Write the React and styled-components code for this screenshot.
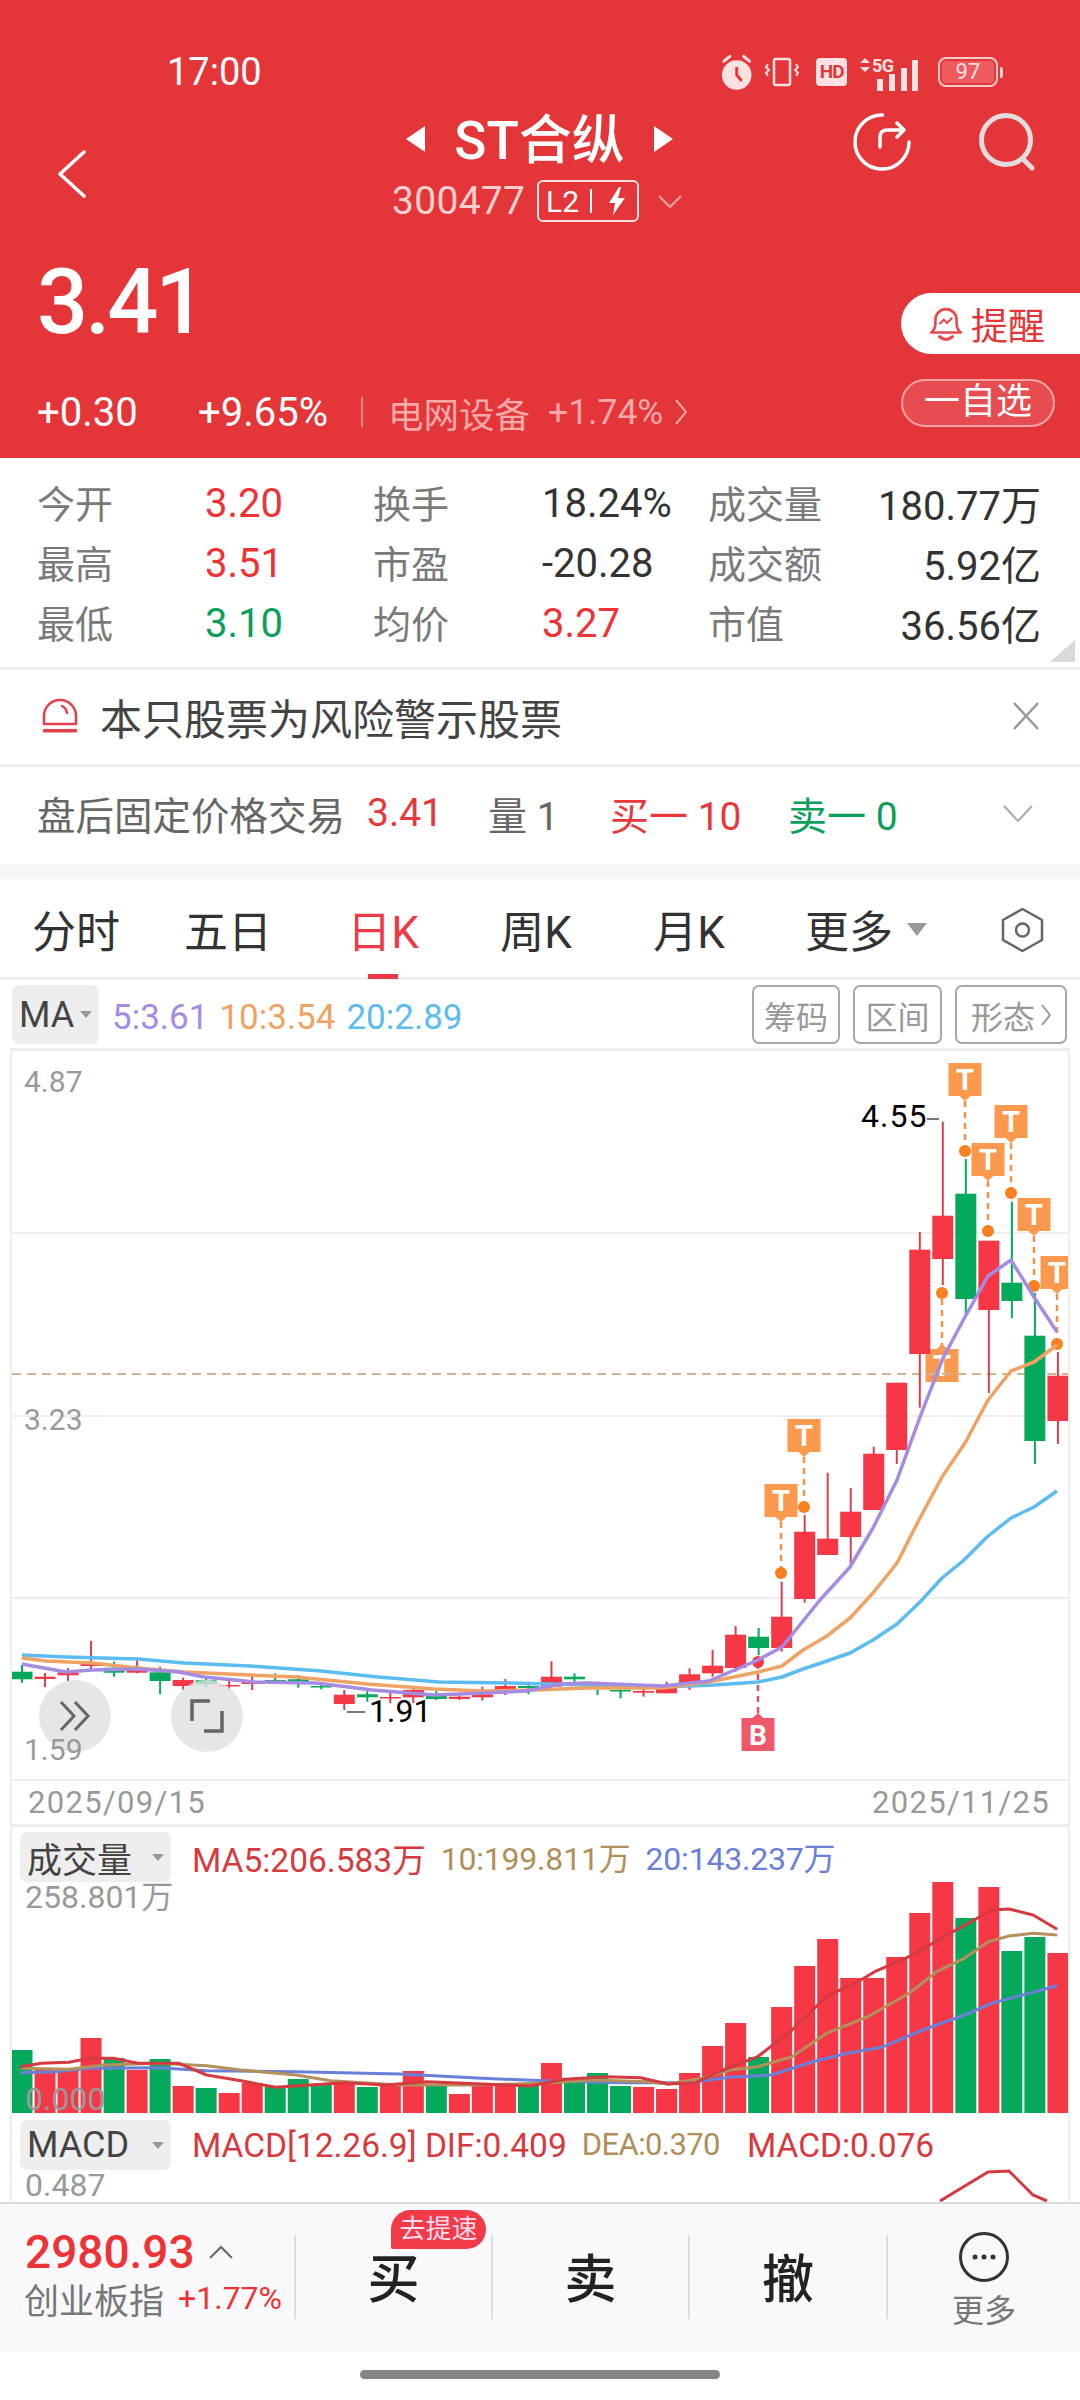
import React from "react";
import styled, { createGlobalStyle } from "styled-components";

const RED = "#e43639";
const UP = "#f63746";
const DOWN = "#05a95b";
const FONT = `Roboto, "Noto Sans CJK SC", sans-serif`;

const Global = createGlobalStyle`
  html, body { margin: 0; padding: 0; background: #fff; }
  body { font-family: ${FONT}; }
`;

const Page = styled.div`width:1080px; height:2400px; overflow:hidden; display:flex; flex-direction:column; background:#fff; color:#333;`;

/* header */
const Header = styled.header`height:458px; flex:none; background:${RED}; color:#fff; display:flex; flex-direction:column;`;
const StatusBar = styled.div`height:44px; margin-top:50px; margin-bottom:6px; padding:0 77px 0 167px; display:flex; align-items:center; justify-content:space-between;`;
const Clock = styled.span`font-size:38px; line-height:44px;`;
const StatusIcons = styled.div`display:flex; align-items:center; width:283px; margin-left:-2px;`;
const HdBadge = styled.span`width:31px; height:28px; margin-left:16px; background:#fde0e0; color:${RED}; border-radius:4px; font-size:19px; font-weight:700; line-height:28px; text-align:center; letter-spacing:-1px;`;
const Battery = styled.span`position:relative; margin-left:15px; width:61px; height:30px; box-sizing:border-box; border:2px solid #f8c9c9; border-radius:8px; padding:2px; display:flex;`;
const BatteryFill = styled.span`flex:1; background:#ee5a5e; border-radius:3px; color:#fde0e0; font-size:22px; line-height:22px; text-align:center;`;
const BatteryNub = styled.span`width:3px; height:11px; margin-left:2px; background:#f8c9c9; border-radius:0 2px 2px 0;`;

const NavRow = styled.div`height:130px; flex:none; display:flex;`;
const BackSlot = styled.div`width:400px; padding:50px 0 0 58px; box-sizing:border-box;`;
const TitleBlock = styled.div`width:280px; display:flex; flex-direction:column; align-items:flex-start;`;
const TitleLine = styled.div`height:60px; margin-top:9px; width:100%; display:flex; align-items:center; justify-content:space-between; padding:0 7px 0 6px; box-sizing:border-box;`;
const Title = styled.span`font-size:53px; line-height:60px; font-weight:500; position:relative; top:2px;`;
const Arrow = styled.span`width:0; height:0; border-top:13px solid transparent; border-bottom:13px solid transparent; ${p => p.$right ? "border-left:19px solid #fff;" : "border-right:19px solid #fff;"}`;
const SubLine = styled.div`height:50px; margin-top:7px; margin-left:-8px; display:flex; align-items:center;`;
const Code = styled.span`font-size:39px; line-height:50px; color:#f9cfcf; width:145px; letter-spacing:0.3px;`;
const LevelBadge = styled.span`width:102px; height:42px; box-sizing:border-box; border:2px solid #fbe3e3; border-radius:6px; display:flex; align-items:center; font-size:30px; padding-left:7px;`;
const BadgeSep = styled.span`width:2px; height:24px; background:#fff; margin:0 15px 0 11px;`;
const SubGap = styled.span`width:19px;`;
const Actions = styled.div`width:400px; padding:13px 0 0 173px; box-sizing:border-box; display:flex; gap:68px; align-items:flex-start;`;

const QuoteRow = styled.div`flex:1; display:flex; justify-content:space-between;`;
const QuoteLeft = styled.div`padding-left:37px;`;
const Price = styled.div`font-size:90px; line-height:88px; font-weight:500; margin-top:29px; letter-spacing:-3px;`;
const ChangeRow = styled.div`height:50px; margin-top:40px; display:flex; align-items:center; font-size:40px;`;
const Change = styled.span`width:${p => p.$w}px; flex:none;`;
const ChangeSep = styled.span`width:2px; height:30px; background:#ee8a8c; margin:0 25px 0 0;`;
const Sector = styled.span`color:#f7aaa9; font-size:35.5px; width:160px; flex:none;`;
const SectorPct = styled.span`color:#f7aaa9; font-size:35.5px; width:127px; flex:none;`;
const QuoteRight = styled.div`width:179px; padding-top:63px; display:flex; flex-direction:column; align-items:flex-start; box-sizing:border-box;`;
const RemindBtn = styled.div`width:179px; height:61px; background:#fff; border-radius:31px 0 0 31px; color:${RED}; font-size:37px; display:flex; align-items:center; padding-left:27px; box-sizing:border-box; gap:7px;`;
const WatchBtn = styled.div`margin-top:25px; width:154px; height:48px; box-sizing:border-box; border:2px solid #f4a3a4; border-radius:24px; background:#e74c50; font-size:36px; line-height:42px; text-align:center;`;

/* stats */
const Stats = styled.section`position:relative; height:212px; flex:none; box-sizing:border-box; padding:14px 39px 0 37px; display:grid; grid-template-columns:168px 168px 169px 166px 150px 183px; grid-auto-rows:60px; align-items:center; border-bottom:3px solid #eee;`;
const StatLabel = styled.span`font-size:38px; color:#7a7a7a; position:relative; top:-1px;`;
const StatValue = styled.span`font-size:40px; color:${p => p.$tone === "up" ? "#ee3236" : p.$tone === "down" ? "#0aa05a" : "#333"}; text-align:${p => p.$right ? "right" : "left"}; white-space:nowrap; position:relative; top:1px;`;
const Corner = styled.span`position:absolute; right:5px; bottom:5px; width:25px; height:22px; background:#d9d9d9; clip-path:polygon(100% 0, 100% 100%, 0 100%);`;

/* rows */
const Notice = styled.div`height:97px; flex:none; display:flex; align-items:center; box-sizing:border-box; padding:0 40px 2px 42px; border-bottom:3px solid #eee;`;
const NoticeText = styled.span`flex:1; margin-left:22px; font-size:42px; color:#444;`;
const AfterHours = styled.div`height:97px; flex:none; box-sizing:border-box; display:flex; align-items:center; padding:0 40px 5px 37px; font-size:39px; color:#666;`;
const AfterLabel = styled.span`font-size:38.5px; width:330px; color:#666;`;
const AfterCell = styled.span`width:${p => p.$w}px; color:${p => p.$c || "#666"};`;
const Gap = styled.div`height:15px; flex:none; background:#f6f6f6;`;

/* tabs */
const Tabs = styled.nav`height:101px; flex:none; display:flex; align-items:stretch; box-sizing:border-box; border-bottom:3px solid #eee;`;
const Tab = styled.span`position:relative; width:${p => p.$w}px; display:flex; align-items:center; justify-content:center; box-sizing:border-box; padding-top:2px; font-size:44px; color:${p => p.$on ? "#ee3a46" : "#333"};`;
const TabBar = styled.i`position:absolute; left:50%; margin-left:-15px; bottom:-2px; width:30px; height:5px; background:#ee3a46;`;
const MoreTab = styled.span`width:196px; padding:2px 0 0 37px; box-sizing:border-box; font-size:44px; display:flex; align-items:center; gap:14px; color:#333;`;
const HexSlot = styled.span`margin-left:37px; padding-top:4px; display:flex; align-items:center;`;
const Caret = styled.i`width:0; height:0; border-left:${p => p.$s}px solid transparent; border-right:${p => p.$s}px solid transparent; border-top:${p => p.$s * 1.3}px solid #999;`;

const MaRow = styled.div`height:68px; flex:none; box-sizing:border-box; padding:5px 13px 0 12px; display:flex; align-items:flex-start;`;
const Pill = styled.div`width:${p => p.$w}px; height:${p => p.$h || 50}px; flex:none; background:#eee; border-radius:7px; display:flex; align-items:center; justify-content:space-between; box-sizing:border-box; padding:0 7px 0 ${p => p.$pl || 7}px; font-size:${p => p.$fs || 36}px; color:#444;`;
const MaValues = styled.div`height:59px; padding-top:5px; box-sizing:border-box; display:flex; align-items:center; font-size:35px; margin-left:13px; flex:1; gap:11px;`;
const MaValue = styled.span`color:${p => p.$c};`;
const ToolBtn = styled.span`height:59px; width:${p => p.$w}px; margin-left:${p => p.$ml || 0}px; box-sizing:border-box; border:2px solid #a8a8a8; border-radius:7px; color:#999; font-size:32px; display:flex; align-items:center; justify-content:center; gap:6px;`;

/* chart frames */
const Frame = styled.div`position:relative; flex:none; margin:0 10px; height:${p => p.$h}px; box-sizing:border-box; border-left:2px solid #eee; border-right:2px solid #eee; border-top:${p => p.$top ? "3px solid #eee" : "0"};`;
const ChartSvg = styled.svg`display:block; position:absolute; left:0; top:0;`;
const AxisLabel = styled.span`position:absolute; left:${p => p.$x}px; top:${p => p.$y}px; font-size:${p => p.$fs || 30}px; line-height:26px; color:#999; letter-spacing:${p => p.$ls || 0}px;`;
const Extreme = styled.span`position:absolute; left:${p => p.$x}px; top:${p => p.$y}px; font-size:32px; line-height:34px; color:#000; letter-spacing:${p => p.$ls || 0}px;`;
const FloatBtn = styled.span`position:absolute; left:${p => p.$x}px; top:629px; width:72px; height:72px; border-radius:50%; background:rgba(225,225,225,0.82); display:flex; align-items:center; justify-content:center;`;
const DateRow = styled.div`height:48px; flex:none; margin:0 10px; box-sizing:border-box; border-left:2px solid #eee; border-right:2px solid #eee; border-top:2px solid #eee; border-bottom:3px solid #eee; padding:0 18px 0 16px; display:flex; align-items:center; justify-content:space-between; font-size:31px; color:#999; letter-spacing:1.3px;`;
const PanelHead = styled.div`position:relative; z-index:1; display:flex; align-items:center; padding:${p => p.$pt}px 0 0 8px;`;
const Legend = styled.div`display:flex; margin-left:21px; gap:15px; font-size:33.5px;`;
const LegendItem = styled.span`color:${p => p.$c}; white-space:nowrap; margin-left:${p => p.$ml || 0}px; font-size:${p => p.$fs || 33.5}px; letter-spacing:${p => p.$ls || 0}px;`;

/* bottom bar */
const BottomBar = styled.footer`position:absolute; left:0; top:2202px; width:1080px; height:150px; box-sizing:border-box; background:#f9f9fb; border-top:2px solid #ddd; display:flex;`;
const IndexBlock = styled.div`width:294px; flex:none; box-sizing:border-box; padding:25px 0 0 25px;`;
const IndexTop = styled.div`display:flex; align-items:center; height:46px; color:#ee3236; font-size:46px; font-weight:500; gap:14px;`;
const IndexBottom = styled.div`display:flex; align-items:center; height:46px; margin-left:-1px;`;
const IndexName = styled.span`font-size:35px; color:#777; width:154px;`;
const IndexPct = styled.span`font-size:32px; color:#ee3236;`;
const Trade = styled.div`position:relative; width:${p => p.$w}px; flex:none; height:84px; margin-top:31px; padding-bottom:4px; border-left:2px solid #ddd; display:flex; align-items:center; justify-content:center; font-size:52px; font-weight:500; color:#222; box-sizing:border-box;`;
const SpeedTag = styled.span`position:absolute; left:95px; top:-25px; width:95px; height:39px; background:#f23b47; color:#fde; border-radius:20px 20px 20px 2px; font-size:26px; font-weight:400; line-height:39px; text-align:center;`;
const MoreBtn = styled.div`flex:1; display:flex; flex-direction:column; align-items:center; padding-top:28px; font-size:32px; color:#777; gap:3px; border-left:2px solid transparent; position:relative;`;
const MoreSep = styled.i`position:absolute; left:-2px; top:31px; width:2px; height:84px; background:#ddd;`;
const HomeBar = styled.div`position:absolute; left:360px; top:2370px; width:360px; height:9px; border-radius:5px; background:#858585;`;

/* data: colour, wick top, body top, body bottom, wick bottom */
const candles = [
  ["g",1665,1671.7,1679.3,1682.7],["r",1673,1676.7,1679,1687],["r",1668,1672.3,1675.3,1681],["r",1641,1662.7,1666,1670],
  ["g",1661.7,1667.7,1672.7,1676.7],["r",1657.7,1669.3,1672.7,1673.3],["g",1666.7,1672.3,1681,1694.3],["r",1677.7,1680,1686,1690],
  ["g",1678.3,1680.3,1684.3,1687.3],["r",1678.3,1685,1686,1690],["r",1674,1681.7,1684,1690],["g",1673.3,1680,1682.3,1682.7],
  ["g",1675,1679.3,1683.3,1687.7],["g",1682.7,1686,1687,1689.3],["r",1690,1694.7,1704,1710],["g",1690,1694.3,1697.3,1701.7],
  ["r",1692.7,1697,1698,1703.3],["r",1688.3,1690,1697.3,1703],["g",1690.7,1696,1699,1700],["r",1693.3,1696.7,1699,1700],
  ["r",1686.7,1694.3,1697.3,1700.7],["r",1679,1686,1690,1695],["g",1681.7,1686,1688,1694.3],["r",1661.3,1676.7,1686.7,1690],
  ["g",1673.3,1676.7,1679.3,1683.3],["g",1681.7,1686,1687,1695],["g",1686.7,1690,1691,1698.3],["r",1688.3,1691,1692.7,1696.7],
  ["r",1681.7,1685,1693.3,1693.3],["r",1668.3,1674.3,1683.3,1690],["r",1650,1665.7,1673.3,1676.7],["r",1626,1634.7,1668,1671.7],
  ["g",1628,1636.7,1648,1655],["r",1581.7,1616.7,1648,1651.7],["r",1515,1531.7,1599,1602.7],["r",1472.7,1538.7,1555,1555],
  ["r",1488,1511.7,1537,1566.7],["r",1446.7,1453.7,1510,1510],["r",1382.7,1382.7,1450,1464],["r",1232,1249.7,1354,1407.7],
  ["r",1121.7,1215.7,1259,1285],["g",1159,1193.7,1299,1317],["r",1240.7,1240.7,1310,1393],["g",1201.7,1282.7,1301,1318],
  ["g",1293,1335.7,1441,1464],["r",1352,1375.7,1421,1444],
];

const volumes = [
  ["g",2050],["r",2068],["r",2070],["r",2038],["g",2058],["r",2070],["g",2059],["r",2086],["g",2088],["r",2093],["r",2083],["g",2087],
  ["g",2079],["g",2085],["r",2082],["g",2087],["r",2086],["r",2071],["g",2085],["r",2094],["r",2085],["r",2083],["g",2084],["r",2063],
  ["g",2083],["g",2073],["g",2086],["r",2087],["r",2089],["r",2073],["r",2046],["r",2023],["g",2057],["r",2007],["r",1966],["r",1939],
  ["r",1978],["r",1978],["r",1957],["r",1913],["r",1882],["g",1918],["r",1887],["g",1951],["g",1937],["r",1953],
];

const ma5 = "22,1664 66,1672 92,1670 138,1669 179,1672 204,1677 255,1682 316,1683 372,1690 434,1695 485,1693 526,1691 561,1684 587,1683 663,1686 709,1681 758,1660 782,1647 820,1600 850,1567 873,1528 897,1480 920,1417 943,1358 965,1317 988,1276 1011,1260 1034,1297 1057,1332";
const ma10 = "22,1658 46,1661 92,1663 138,1668 184,1672 250,1675 296,1677 367,1684 434,1689 485,1691 536,1690 587,1688 663,1688 709,1682 758,1672 782,1666 803,1650 827,1636 850,1618 873,1593 897,1563 920,1518 942,1477 965,1443 988,1400 1011,1371 1034,1362 1057,1345";
const ma20 = "22,1655 66,1657 138,1659 184,1663 250,1666 321,1671 378,1677 439,1682 510,1683 587,1685 663,1687 714,1685 758,1682 782,1677 803,1669 827,1661 850,1653 873,1640 897,1624 920,1602 942,1578 963,1561 987,1537 1011,1518 1034,1507 1057,1491";

const volPts = (arr) => arr.map(([x, y]) => `${(x / 1.452).toFixed(1)},${(1800 + y / 3).toFixed(1)}`).join(" ");
const vol5 = volPts([[30,800],[60,790],[100,787],[130,775],[165,775],[200,790],[260,790],[300,825],[350,842],[400,862],[500,848],[560,855],[620,845],[700,852],[770,858],[820,838],[880,830],[930,833],[970,852],[1010,848],[1050,810],[1100,770],[1150,690],[1200,590],[1250,540],[1270,515],[1320,470],[1380,400],[1440,330],[1465,327],[1500,345],[1535,388]]);
const vol10 = volPts([[30,805],[100,808],[150,795],[230,790],[300,797],[350,810],[430,825],[480,842],[580,855],[700,855],[800,848],[860,840],[940,845],[970,852],[1020,835],[1060,810],[1100,800],[1150,770],[1200,700],[1260,650],[1320,580],[1360,515],[1400,475],[1435,425],[1465,408],[1500,400],[1535,405]]);
const vol20 = volPts([[30,818],[80,815],[130,805],[230,803],[300,812],[430,815],[580,822],[700,835],[800,843],[900,848],[1000,848],[1060,832],[1120,825],[1180,785],[1230,760],[1280,742],[1340,690],[1400,645],[1440,610],[1535,557]]);

// x, box top, dot y
const tMarks = [[965,1063,1151],[1011,1105,1193],[988,1143,1231],[1034,1198,1286],[1057,1256,1344],[804,1419,1507],[781,1484,1573]];

const cx = (k) => 22 + 23.02 * k;

const Candles = () => (
  <>
    {candles.map(([c, wt, bt, bb, wb], k) => (
      <g key={k} fill={c === "r" ? UP : DOWN}>
        <rect x={cx(k) - 1} y={wt} width="2" height={wb - wt} fill={c === "r" ? "#d8404e" : DOWN} />
        <rect x={cx(k) - 10.5} y={bt} width="21" height={Math.max(bb - bt, 1.5)} />
      </g>
    ))}
  </>
);

const TMark = ({ x, top, dot }) => (
  <g>
    <line x1={x} y1={top + 38} x2={x} y2={dot} stroke="#f0934a" strokeWidth="2.5" strokeDasharray="6 5" />
    <circle cx={x} cy={dot} r="6" fill="#f8801e" />
    <path d={`M${x - 16.5} ${top}h33v33h-11l-5.5 5l-5.5 -5h-11z`} fill="#fb9a4e" />
    <text x={x} y={top + 27} textAnchor="middle" fontSize="29" fontWeight="700" fill="#fff" fontFamily="Roboto, sans-serif">T</text>
  </g>
);

const MainChart = () => (
  <ChartSvg width="1056" height="728" viewBox="12 1051 1056 728">
    {[1233, 1416, 1598].map(y => <line key={y} x1="12" x2="1068" y1={y} y2={y} stroke="#eee" strokeWidth="2" />)}
    {tMarks.map(([x, top, dot]) => <TMark key={x} x={x} top={top} dot={dot} />)}
    <g>
      <line x1="942" y1="1349" x2="942" y2="1293" stroke="#f0934a" strokeWidth="2.5" strokeDasharray="6 5" />
      <circle cx="942" cy="1293" r="6" fill="#f8801e" />
      <path d="M925.5 1349h11l5.500 -5l5.500 5h11v33h-33z" fill="#fb9a4e" />
      <text x="942" y="1376" textAnchor="middle" fontSize="29" fontWeight="700" fill="#fff" fontFamily="Roboto, sans-serif">T</text>
    </g>
    <line x1="12" x2="1068" y1="1374" y2="1374" stroke="#cdb591" strokeWidth="2" strokeDasharray="9 6" />
    <Candles />
    <g>
      <line x1="758" y1="1663" x2="758" y2="1713" stroke="#c95660" strokeWidth="2.500" strokeDasharray="6 5" />
      <circle cx="758" cy="1662" r="6" fill="#ee3a46" />
      <path d="M741.500 1718h11l5.500 -5l5.500 5h11v33h-33z" fill="#ef5868" />
      <text x="758" y="1745" textAnchor="middle" fontSize="28" fontWeight="700" fill="#fff" fontFamily="Roboto, sans-serif">B</text>
    </g>
    <g fill="none" strokeWidth="3.5" strokeLinejoin="round">
      <polyline points={ma20} stroke="#5cbcf0" />
      <polyline points={ma10} stroke="#f0a263" />
      <polyline points={ma5} stroke="#a58ce3" />
    </g>
    <line x1="927" x2="939" y1="1119" y2="1119" stroke="#777" strokeWidth="2" />
    <line x1="347" x2="365" y1="1712" y2="1712" stroke="#777" strokeWidth="2" />
  </ChartSvg>
);

const VolumeChart = () => (
  <ChartSvg width="1056" height="286" viewBox="12 1827 1056 286">
    {volumes.map(([c, y], k) => <rect key={k} x={cx(k) - 10.500} y={y} width="21" height={2113 - y} fill={c === "r" ? UP : DOWN} />)}
    <g fill="none" strokeWidth="3" strokeLinejoin="round">
      <polyline points={vol20} stroke="#6a80d8" />
      <polyline points={vol10} stroke="#b4905a" />
      <polyline points={vol5} stroke="#d43a40" />
    </g>
  </ChartSvg>
);

const AlarmIcon = () => (
  <svg width="34" height="36" viewBox="0 0 34 36">
    <circle cx="17" cy="21" r="15" fill="#fde0e0" />
    <path d="M17 13v8l5 6" stroke={RED} strokeWidth="3" fill="none" />
    <path d="M4 7l6 -5M30 7l-6 -5" stroke="#fde0e0" strokeWidth="3" strokeLinecap="round" />
  </svg>
);

const VibrateIcon = () => (
  <svg width="36" height="30" viewBox="0 0 36 30">
    <rect x="10" y="2" width="16" height="26" rx="2" fill="none" stroke="#fde0e0" strokeWidth="2.500" />
    <path d="M4 7l-2 3l3 3l-3 3l2 3M32 7l2 3l-3 3l3 3l-2 3" fill="none" stroke="#fde0e0" strokeWidth="2" />
  </svg>
);

const VibrateSlot = styled.span`margin-left:11px; display:flex;`;
const SignalSlot = styled.span`margin-left:12px; display:flex;`;

const Signal = () => (
  <svg width="64" height="38" viewBox="0 -4 64 38">
    <path d="M1 6l5 -5l5 5zM1 10l5 5l5 -5z" fill="#fde0e0" />
    <text x="13" y="15" fontSize="18" fontWeight="700" fill="#fde0e0" fontFamily="Roboto, sans-serif" letterSpacing="-0.5">5G</text>
    <g fill="#fde0e0">
      <rect x="18" y="22" width="6" height="12" />
      <rect x="30" y="17" width="6" height="17" />
      <rect x="42" y="11" width="6" height="23" />
      <rect x="53" y="3" width="6" height="31" />
    </g>
  </svg>
);

const Back = () => (
  <svg width="28" height="48" viewBox="0 0 28 48"><path d="M26 2L2 24l24 22" fill="none" stroke="#fff" strokeWidth="3.500" strokeLinecap="round" strokeLinejoin="round" /></svg>
);

const Share = () => (
  <svg width="58" height="58" viewBox="0 0 58 58">
    <path d="M29.500 2A27 27 0 1 0 56 29" fill="none" stroke="#fff" strokeWidth="3.500" strokeLinecap="round" />
    <path d="M27 34V24q0 -7 8 -7h15M44 10l7 7l-7 7" fill="none" stroke="#fff" strokeWidth="3.500" strokeLinecap="round" strokeLinejoin="round" />
  </svg>
);

const Search = () => (
  <svg width="56" height="58" viewBox="0 0 56 58">
    <circle cx="27" cy="27" r="24.500" fill="none" stroke="#e2dcdc" strokeWidth="5" />
    <path d="M44 46l9 9" stroke="#e2dcdc" strokeWidth="5" strokeLinecap="round" />
  </svg>
);

const Bell = () => (
  <svg width="36" height="36" viewBox="0 0 34 34">
    <path d="M3 25q4 -3 4 -9v-3a10 10 0 0 1 20 0v3q0 6 4 9z" fill="none" stroke="#e54a50" strokeWidth="2.500" strokeLinejoin="round" />
    <path d="M11 29q6 5 12 0" fill="none" stroke="#e54a50" strokeWidth="3" strokeLinecap="round" />
    <path d="M11 17l4 -4l3 3l5 -5" fill="none" stroke="#e54a50" strokeWidth="2" />
  </svg>
);

const Siren = () => (
  <svg width="36" height="36" viewBox="0 0 36 36">
    <path d="M2 26V18a16 16 0 0 1 32 0v8z" fill="none" stroke="#e2414c" strokeWidth="2.500" strokeLinejoin="round" />
    <path d="M20 8q4 2 5 7" fill="none" stroke="#e2414c" strokeWidth="2.500" strokeLinecap="round" />
    <rect x="1" y="31" width="34" height="3.500" fill="#e2414c" />
  </svg>
);

const Close = () => (
  <svg width="28" height="30" viewBox="0 0 28 30"><path d="M2 2l24 26M26 2L2 28" stroke="#999" strokeWidth="2.500" /></svg>
);

const Chevron = ({ w, h, c, sw = 2 }) => (
  <svg width={w} height={h} viewBox={`0 0 ${w} ${h}`}><path d={`M1 1L${w / 2} ${h - 1}L${w - 1} 1`} fill="none" stroke={c} strokeWidth={sw} /></svg>
);

const Hexagon = () => (
  <svg width="43" height="46" viewBox="0 0 43 46">
    <path d="M21.500 2L41 13v20L21.500 44L2 33V13z" fill="none" stroke="#666" strokeWidth="2.500" strokeLinejoin="round" />
    <circle cx="21.500" cy="23" r="6.500" fill="none" stroke="#666" strokeWidth="2.500" />
  </svg>
);

const Bolt = () => (
  <svg width="20" height="28" viewBox="0 0 20 28"><path d="M12 0L2 16h6l-2 12l12 -17h-7l3 -11z" fill="#fff" /></svg>
);

const rows = [
  ["今开", "3.20", "up", "换手", "18.24%", "", "成交量", "180.77万"],
  ["最高", "3.51", "up", "市盈", "-20.28", "", "成交额", "5.92亿"],
  ["最低", "3.10", "down", "均价", "3.27", "up", "市值", "36.56亿"],
];

const tabs = [["分时", 152], ["五日", 152], ["日K", 158, true], ["周K", 148], ["月K", 158]];

export default function App() {
  return (
    <Page>
      <Global />
      <Header>
        <StatusBar>
          <Clock>17:00</Clock>
          <StatusIcons>
            <AlarmIcon />
            <VibrateSlot><VibrateIcon /></VibrateSlot>
            <HdBadge>HD</HdBadge>
            <SignalSlot><Signal /></SignalSlot>
            <Battery><BatteryFill>97</BatteryFill></Battery>
            <BatteryNub />
          </StatusIcons>
        </StatusBar>
        <NavRow>
          <BackSlot><Back /></BackSlot>
          <TitleBlock>
            <TitleLine>
              <Arrow />
              <Title>ST合纵</Title>
              <Arrow $right />
            </TitleLine>
            <SubLine>
              <Code>300477</Code>
              <LevelBadge>L2<BadgeSep /><Bolt /></LevelBadge>
              <SubGap />
              <Chevron w={24} h={13} c="#f4a3a4" />
            </SubLine>
          </TitleBlock>
          <Actions><Share /><Search /></Actions>
        </NavRow>
        <QuoteRow>
          <QuoteLeft>
            <Price>3.41</Price>
            <ChangeRow>
              <Change $w={161}>+0.30</Change>
              <Change $w={163}>+9.65%</Change>
              <ChangeSep />
              <Sector>电网设备</Sector>
              <SectorPct>+1.74%</SectorPct>
              <svg width="12" height="28" viewBox="0 0 12 28"><path d="M1 2l10 12L1 26" fill="none" stroke="#f7aaa9" strokeWidth="2" /></svg>
            </ChangeRow>
          </QuoteLeft>
          <QuoteRight>
            <RemindBtn><Bell />提醒</RemindBtn>
            <WatchBtn>一自选</WatchBtn>
          </QuoteRight>
        </QuoteRow>
      </Header>

      <Stats>
        {rows.map(r => (
          <React.Fragment key={r[0]}>
            <StatLabel>{r[0]}</StatLabel>
            <StatValue $tone={r[2]}>{r[1]}</StatValue>
            <StatLabel>{r[3]}</StatLabel>
            <StatValue $tone={r[5]}>{r[4]}</StatValue>
            <StatLabel>{r[6]}</StatLabel>
            <StatValue $right>{r[7]}</StatValue>
          </React.Fragment>
        ))}
        <Corner />
      </Stats>

      <Notice>
        <Siren />
        <NoticeText>本只股票为风险警示股票</NoticeText>
        <Close />
      </Notice>
      <AfterHours>
        <AfterLabel>盘后固定价格交易</AfterLabel>
        <AfterCell $w={121} $c="#e8383c">3.41</AfterCell>
        <AfterCell $w={122}>量 1</AfterCell>
        <AfterCell $w={178} $c="#e8383c">买一 10</AfterCell>
        <AfterCell $w={215} $c="#0aa05a">卖一 0</AfterCell>
        <Chevron w={30} h={17} c="#aaa" />
      </AfterHours>
      <Gap />

      <Tabs>
        {tabs.map(([t, w, on]) => <Tab key={t} $w={w} $on={on}>{t}{on && <TabBar />}</Tab>)}
        <MoreTab>更多<Caret $s={10} /></MoreTab>
        <HexSlot><Hexagon /></HexSlot>
      </Tabs>

      <MaRow>
        <Pill $w={87} $h={59}>MA<Caret $s={6} /></Pill>
        <MaValues>
          <MaValue $c="#a58ce3">5:3.61</MaValue>
          <MaValue $c="#f0a263">10:3.54</MaValue>
          <MaValue $c="#5cbcf0">20:2.89</MaValue>
        </MaValues>
        <ToolBtn $w={88}>筹码</ToolBtn>
        <ToolBtn $w={89} $ml={13}>区间</ToolBtn>
        <ToolBtn $w={112} $ml={13}>形态<svg width="10" height="24" viewBox="0 0 10 24"><path d="M1 2l8 10L1 22" fill="none" stroke="#999" strokeWidth="2" /></svg></ToolBtn>
      </MaRow>

      <Frame $h={731} $top>
        <MainChart />
        <FloatBtn $x={27}>
          <svg width="34" height="32" viewBox="0 0 34 32"><path d="M3 2l13 14L3 30M17 2l13 14l-13 14" fill="none" stroke="#666" strokeWidth="3" /></svg>
        </FloatBtn>
        <FloatBtn $x={159}>
          <svg width="34" height="34" viewBox="0 0 34 34"><path d="M20 2H2v20M14 32h18V12" fill="none" stroke="#666" strokeWidth="3.500" /></svg>
        </FloatBtn>
        <AxisLabel $x={12} $y={18} $fs={30}>4.87</AxisLabel>
        <AxisLabel $x={12} $y={356} $fs={30}>3.23</AxisLabel>
        <AxisLabel $x={12} $y={686} $fs={30}>1.59</AxisLabel>
        <Extreme $x={849} $y={48} $ls={1}>4.55</Extreme>
        <Extreme $x={357} $y={643}>1.91</Extreme>
      </Frame>
      <DateRow><span>2025/09/15</span><span>2025/11/25</span></DateRow>

      <Frame $h={286}>
        <VolumeChart />
        <PanelHead $pt={5}>
          <Pill $w={151} $fs={35} $pl={7}>成交量<Caret $s={6} /></Pill>
          <Legend>
            <LegendItem $c="#d63a3f">MA5:206.583万</LegendItem>
            <LegendItem $c="#b08f5a" $fs={32} $ls={-0.2}>10:199.811万</LegendItem>
            <LegendItem $c="#6a80d8" $fs={32} $ls={-0.2}>20:143.237万</LegendItem>
          </Legend>
        </PanelHead>
        <AxisLabel $x={13} $y={57} $fs={32}>258.801万</AxisLabel>
        <AxisLabel $x={13} $y={259} $fs={32}>0.000</AxisLabel>
      </Frame>

      <Frame $h={89}>
        <PanelHead $pt={7}>
          <Pill $w={151} $fs={36} $pl={7}>MACD<Caret $s={6} /></Pill>
          <Legend>
            <LegendItem $c="#d63a3f">MACD[12.26.9] DIF:0.409</LegendItem>
            <LegendItem $c="#b08f5a" $fs={31} $ls={-0.6}>DEA:0.370</LegendItem>
            <LegendItem $c="#d63a3f" $ml={12}>MACD:0.076</LegendItem>
          </Legend>
        </PanelHead>
        <AxisLabel $x={13} $y={59} $fs={32}>0.487</AxisLabel>
        <ChartSvg width="1056" height="89" viewBox="12 2113 1056 89">
          <polyline points="940,2201 988,2172 1009,2171 1033,2195 1047,2201" fill="none" stroke="#d43a40" strokeWidth="3" />
        </ChartSvg>
      </Frame>

      <BottomBar>
        <IndexBlock>
          <IndexTop>2980.93<svg width="24" height="14" viewBox="0 0 24 14"><path d="M1 13L12 2l11 11" fill="none" stroke="#666" strokeWidth="2" /></svg></IndexTop>
          <IndexBottom><IndexName>创业板指</IndexName><IndexPct>+1.77%</IndexPct></IndexBottom>
        </IndexBlock>
        <Trade $w={197}>买<SpeedTag>去提速</SpeedTag></Trade>
        <Trade $w={197}>卖</Trade>
        <Trade $w={198}>撤</Trade>
        <MoreBtn>
          <MoreSep />
          <svg width="50" height="50" viewBox="0 0 50 50">
            <circle cx="25" cy="25" r="23.500" fill="none" stroke="#333" strokeWidth="3" />
            <circle cx="16" cy="25" r="2.500" fill="#333" /><circle cx="25" cy="25" r="2.500" fill="#333" /><circle cx="34" cy="25" r="2.500" fill="#333" />
          </svg>
          更多
        </MoreBtn>
      </BottomBar>
      <HomeBar />
    </Page>
  );
}
